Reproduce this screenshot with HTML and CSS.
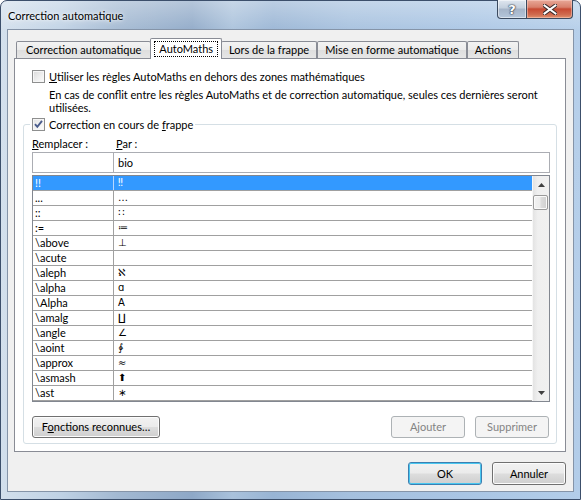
FILE: index.html
```html
<!DOCTYPE html>
<html lang="fr">
<head>
<meta charset="utf-8">
<title>Correction automatique</title>
<link rel="stylesheet" href="styles.css">
</head>
<body>
<div class="window">
  <div class="titlebar">
    <span class="title">Correction automatique</span>
    <div class="caption">
      <div class="cbtn help"><span class="q">?</span></div>
      <div class="cbtn close">
        <svg width="14" height="11" viewBox="0 0 14 11"><path d="M1.5 1.5 L12.5 9.5 M12.5 1.5 L1.5 9.5" stroke="#3a2a2a" stroke-width="4" stroke-linecap="square"/><path d="M1.5 1.5 L12.5 9.5 M12.5 1.5 L1.5 9.5" stroke="#fff" stroke-width="2" stroke-linecap="square"/></svg>
      </div>
    </div>
  </div>
  <div class="client">
    <div class="tabs">
      <div class="tab">Correction automatique</div>
      <div class="tab active"><span class="focus">AutoMaths</span></div>
      <div class="tab">Lors de la frappe</div>
      <div class="tab">Mise en forme automatique</div>
      <div class="tab">Actions</div>
    </div>
    <div class="panel">
      <div class="opt">
        <span class="cb"></span>
        <span><u>U</u>tiliser les règles AutoMaths en dehors des zones mathématiques</span>
      </div>
      <p class="desc">En cas de conflit entre les règles AutoMaths et de correction automatique, seules ces dernières seront<br>utilisées.</p>
      <fieldset class="group">
        <legend class="legend">
          <span class="cb checked"><svg width="11" height="11" viewBox="0 0 11 11"><path d="M2 5.2 L4.3 7.8 L9 1.8" fill="none" stroke="#4a5c8c" stroke-width="1.9"/></svg></span>
          <span>Correction en cours de <u>f</u>rappe</span>
        </legend>
        <div class="heads">
          <span class="h-left"><u>R</u>emplacer :</span>
          <span><u>P</u>ar :</span>
        </div>
        <div class="inputs">
          <div class="field f-left"></div>
          <div class="field f-right">bio</div>
        </div>
        <div class="list">
          <div class="rows">
            <div class="row sel"><span class="c1">!!</span><span class="c2 sym">‼</span></div>
            <div class="row"><span class="c1">...</span><span class="c2 sym">…</span></div>
            <div class="row"><span class="c1">::</span><span class="c2 sym">∷</span></div>
            <div class="row"><span class="c1">:=</span><span class="c2 sym">≔</span></div>
            <div class="row"><span class="c1">\above</span><span class="c2 sym">⊥</span></div>
            <div class="row"><span class="c1">\acute</span><span class="c2 sym"></span></div>
            <div class="row"><span class="c1">\aleph</span><span class="c2 sym">ℵ</span></div>
            <div class="row"><span class="c1">\alpha</span><span class="c2 sym">ɑ</span></div>
            <div class="row"><span class="c1">\Alpha</span><span class="c2 sym">Α</span></div>
            <div class="row"><span class="c1">\amalg</span><span class="c2 sym">∐</span></div>
            <div class="row"><span class="c1">\angle</span><span class="c2 sym">∠</span></div>
            <div class="row"><span class="c1">\aoint</span><span class="c2 sym">∳</span></div>
            <div class="row"><span class="c1">\approx</span><span class="c2 sym">≈</span></div>
            <div class="row"><span class="c1">\asmash</span><span class="c2 sym">⬆</span></div>
            <div class="row"><span class="c1">\ast</span><span class="c2 sym">∗</span></div>
          </div>
          <div class="sb">
            <div class="arrow"><svg width="7" height="4" viewBox="0 0 7 4"><path d="M0 4 L3.5 0 L7 4 Z" fill="#404040"/></svg></div>
            <div class="track"><div class="thumb"></div></div>
            <div class="arrow"><svg width="7" height="4" viewBox="0 0 7 4"><path d="M0 0 L3.5 4 L7 0 Z" fill="#404040"/></svg></div>
          </div>
        </div>
        <div class="btnrow">
          <button class="btn b-func">F<u>o</u>nctions reconnues…</button>
          <span class="spacer"></span>
          <button class="btn b-small" disabled>Ajouter</button>
          <button class="btn b-small" disabled>Supprimer</button>
        </div>
      </fieldset>
    </div>
    <div class="footer">
      <button class="btn b-foot default">OK</button>
      <button class="btn b-foot">Annuler</button>
    </div>
  </div>
</div>
</body>
</html>
```

FILE: styles.css
```css
* { box-sizing: border-box; }
html, body { margin: 0; padding: 0; }
body {
  width: 581px;
  height: 500px;
  overflow: hidden;
  background: #fff;
  font-family: "Lato", "Open Sans", sans-serif;
  font-size: 11px;
  color: #000;
}
u { text-decoration: underline; text-underline-offset: 1px; }

.window {
  width: 581px;
  height: 500px;
  display: flex;
  flex-direction: column;
  padding: 0 6px 7px 6px;
  border: 1px solid #3c4f6b;
  border-radius: 7px 7px 0 0;
  background:
    linear-gradient(180deg, rgba(255,255,255,0.35) 0, rgba(255,255,255,0.05) 30px, rgba(255,255,255,0) 100%),
    linear-gradient(90deg, #d2dfec 0%, #c0d2e5 10%, #a3b9d2 20%, #8ea8c7 33%, #a9c1db 40%, #98b4d4 47%, #a5c0de 60%, #a9c5e4 80%, #b3cde9 100%);
}

.titlebar {
  height: 29px;
  margin-top: -1px;
  display: flex;
  justify-content: space-between;
  align-items: flex-start;
  padding-left: 1px;
}
.title {
  margin-top: 9px;
  font-size: 11px;
  line-height: 13px;
  color: #000;
  text-shadow: 0 0 6px rgba(255,255,255,0.9), 0 0 3px rgba(255,255,255,0.9);
}
.caption {
  display: flex;
  margin-right: 1px;
}
.cbtn {
  height: 19px;
  border: 1px solid #3b4a5f;
  border-top: none;
  display: flex;
  align-items: center;
  justify-content: center;
}
.help {
  width: 30px;
  border-radius: 0 0 0 4px;
  background: linear-gradient(180deg, #dfe6ef 0%, #c3cfdd 45%, #a5b4c8 50%, #b4c6db 100%);
  box-shadow: inset 0 0 0 1px rgba(255,255,255,0.5);
}
.help .q {
  font-family: "DejaVu Sans", sans-serif;
  font-weight: bold;
  font-size: 13px;
  line-height: 13px;
  color: #fff;
  text-shadow: 0 0 1px #2e3a4c, 0 0 1px #2e3a4c, 0 0 2px #2e3a4c;
}
.close {
  width: 46px;
  border-left: none;
  border-radius: 0 0 4px 0;
  background: linear-gradient(180deg, #e8a898 0%, #d8806c 40%, #c74a33 50%, #cf6a4f 80%, #e0906c 100%);
  box-shadow: inset 0 0 0 1px rgba(255,220,210,0.45);
}

.client {
  flex: 1;
  display: flex;
  flex-direction: column;
  background: #f0f0f0;
  border: 1px solid #8594a8;
  padding: 8px 7px 0 6px;
}

.tabs {
  display: flex;
  align-items: flex-end;
  height: 20px;
  padding-left: 2px;
}
.tab {
  height: 17px;
  padding: 0 7px;
  border: 1px solid #898c95;
  border-bottom: none;
  border-radius: 2px 2px 0 0;
  background: linear-gradient(180deg, #f3f3f3 0%, #ebebeb 50%, #dedede 51%, #e6e6e6 100%);
  line-height: 15px;
  white-space: nowrap;
}
.tab:first-child { padding: 0 9px; }
.tab.active {
  height: 21px;
  margin: 0 -1px -1px -1px;
  padding: 2px 4px 0 4px;
  background: #fff;
  position: relative;
  z-index: 1;
}
.focus {
  display: inline-block;
  padding: 0 4px;
  line-height: 14px;
  outline: 1px dotted #000;
  outline-offset: 0;
}

.panel {
  height: 394px;
  border: 1px solid #898c95;
  background: #fff;
  padding: 11px 0 0 8px;
  display: flex;
  flex-direction: column;
}
.opt {
  display: flex;
  align-items: center;
  gap: 4px;
  margin-left: 9px;
  height: 13px;
  line-height: 13px;
}
.cb {
  width: 13px;
  height: 13px;
  flex: none;
  border: 1px solid #8e8f8f;
  background: linear-gradient(135deg, #d9d9d9 0%, #eeeeee 55%, #fbfbfb 100%);
  box-shadow: inset 0 0 0 1px #f6f6f6;
  display: flex;
  align-items: center;
  justify-content: center;
}
.cb.checked { background: linear-gradient(135deg, #e2e2e2 0%, #f3f3f3 55%, #fdfdfd 100%); }
.desc {
  margin: 5px 0 0 26px;
  line-height: 13px;
  white-space: nowrap;
}

.group {
  margin: 4px 0 0 0;
  width: 534px;
  padding: 6px 6px 5px 8px;
  border: 1px solid #d5dfe5;
  border-radius: 3px;
  min-width: 0;
}
.legend {
  display: flex;
  align-items: center;
  gap: 4px;
  padding: 0 2px;
  margin-left: -2px;
  height: 13px;
  line-height: 13px;
}
.heads {
  display: flex;
  line-height: 13px;
}
.h-left { width: 84px; }
.inputs {
  display: flex;
  margin-top: 2px;
  height: 21px;
}
.field {
  height: 21px;
  border: 1px solid #abadb3;
  background: #fff;
  line-height: 19px;
}
.f-left { width: 82px; }
.f-right {
  flex: 1;
  margin-left: -1px;
  padding-left: 4px;
}

.list {
  margin-top: 2px;
  height: 227px;
  border: 1px solid #828790;
  display: flex;
  background: #fff;
}
.rows {
  flex: 1;
  display: flex;
  flex-direction: column;
}
.row {
  height: 15px;
  display: flex;
  border-bottom: 1px solid #a0a0a0;
  line-height: 14px;
  white-space: nowrap;
}
.c1 {
  width: 81px;
  padding-left: 2px;
  border-right: 1px solid #a0a0a0;
}
.c2 { padding-left: 4px; flex: 1; }
.sym { font-family: "DejaVu Sans", sans-serif; font-size: 10px; }
.row.sel { background: #3399ff; color: #fff; }
.row.sel .c1 { border-right-color: #b8d8ff; }

.sb {
  width: 17px;
  display: flex;
  flex-direction: column;
  background: linear-gradient(90deg, #e3e3e3 0%, #efefef 30%, #f0f0f0 100%);
  border-left: 1px solid #f7f7f7;
}
.arrow {
  height: 17px;
  display: flex;
  align-items: center;
  justify-content: center;
}
.track { flex: 1; padding-top: 2px; }
.thumb {
  width: 15px;
  height: 15px;
  border: 1px solid #999;
  border-radius: 2px;
  background: linear-gradient(90deg, #f2f2f2 0%, #ececec 45%, #dcdcdc 55%, #cfcfcf 100%);
  box-shadow: inset 0 0 0 1px #fafafa;
}

.btnrow {
  display: flex;
  margin-top: 14px;
  padding-right: 1px;
  gap: 10px;
}
.spacer { flex: 1; }
.btn {
  font-family: inherit;
  font-size: 11px;
  color: #000;
  height: 22px;
  padding: 0;
  border: 1px solid #707070;
  border-radius: 3px;
  background: linear-gradient(180deg, #f2f2f2 0%, #ebebeb 48%, #dddddd 52%, #cfcfcf 100%);
  box-shadow: inset 0 0 0 1px #fcfcfc;
  line-height: 18px;
}
.btn:disabled {
  color: #838383;
  border-color: #adb2b5;
  background: #f4f4f4;
  box-shadow: none;
}
.b-func { width: 128px; }
.b-small { width: 74px; }
.footer {
  display: flex;
  justify-content: flex-end;
  gap: 10px;
  margin-top: 10px;
}
.b-foot { width: 74px; height: 23px; }
.btn.default {
  border-color: #3c7fb1;
  box-shadow: inset 0 0 0 1px #48c7f0;
}
```
